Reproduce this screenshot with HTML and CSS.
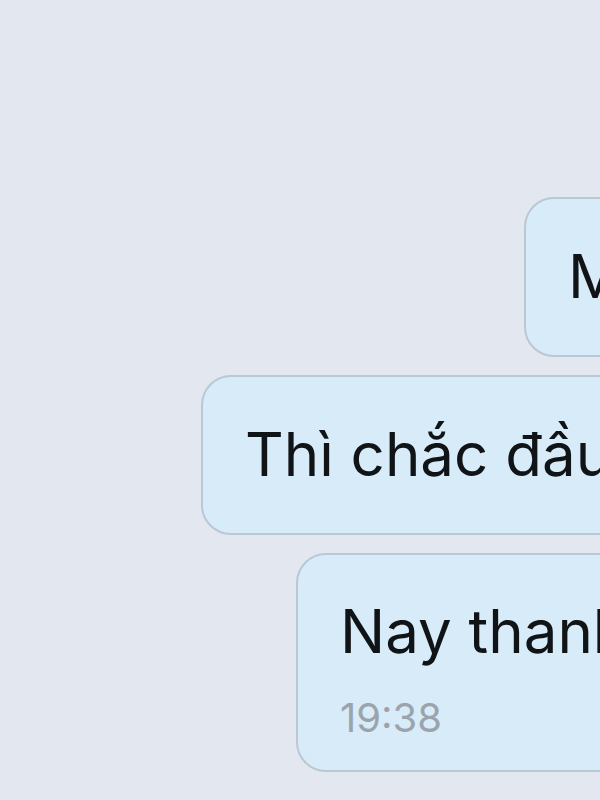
FILE: index.html
```html
<!DOCTYPE html>
<html lang="vi">

<head>
  <meta charset="UTF-8">
  <meta name="viewport" content="width=device-width, initial-scale=1.0">
  <title>Chat</title>
  <link rel="stylesheet" href="styles.css">
</head>

<body>
  <main class="chat">
    <div class="bubble bubble-first">
      <p class="text">Mai mình chuyển khoản nhé</p>
    </div>
    <div class="bubble bubble-second">
      <p class="text">Thì chắc đầu tháng sau</p>
    </div>
    <div class="bubble bubble-third">
      <p class="text">Nay thanh toán rồi</p>
      <span class="time">19:38</span>
    </div>
  </main>
</body>

</html>
```

FILE: styles.css
```css
* {
  box-sizing: border-box;
}

html,
body {
  margin: 0;
  height: 100%;
  overflow: hidden;
}

body {
  background: #e3e7f0;
  font-family: 'Inter', 'Liberation Sans', Arial, sans-serif;
  color: #111417;
}

.chat {
  display: flex;
  flex-direction: column;
  align-items: flex-start;
  gap: 18px;
  padding-top: 197px;
  width: 1400px;
}

.bubble {
  background: #d8ebf9;
  border: 2px solid #b9c8d3;
  border-radius: 30px;
  padding: 42px 120px 43px 42px;
  white-space: nowrap;
}

.bubble-first {
  margin-left: 524px;
}

.bubble-second {
  margin-left: 201px;
}

.bubble-third {
  margin-left: 296px;
  padding-top: 41px;
  padding-bottom: 28px;
}

.text {
  margin: 0;
  font-size: 60px;
  line-height: 71px;
}

.time {
  display: block;
  margin-top: 27px;
  font-size: 40px;
  line-height: 48px;
  color: #9ba4ac;
}
```
